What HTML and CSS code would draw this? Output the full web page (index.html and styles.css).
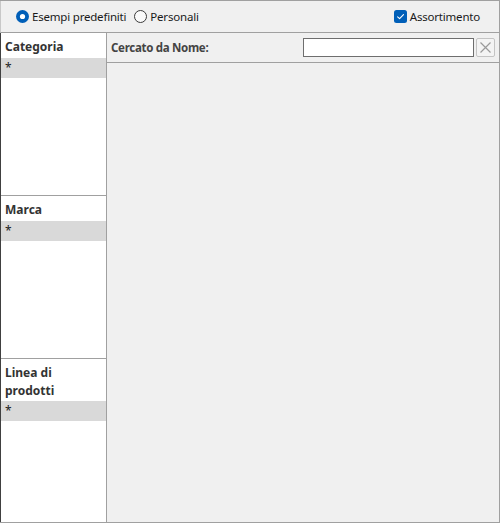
FILE: index.html
```html
<!DOCTYPE html>
<html lang="it">
<head>
<meta charset="utf-8">
<link rel="stylesheet" href="styles.css">
</head>
<body>
<div class="window">
  <div class="toolbar">
    <label class="opt">
      <svg class="radio" width="13" height="13" viewBox="0 0 13 13"><circle cx="6.5" cy="6.5" r="6.5" fill="#005fb8"/><circle cx="6.5" cy="6.5" r="2.6" fill="#fff"/></svg>
      <span>Esempi predefiniti</span>
    </label>
    <label class="opt">
      <svg class="radio" width="13" height="13" viewBox="0 0 13 13"><circle cx="6.5" cy="6.5" r="6" fill="#fafafa" stroke="#3a3a3a" stroke-width="1"/></svg>
      <span>Personali</span>
    </label>
    <label class="opt check-opt">
      <svg class="check" width="13" height="13" viewBox="0 0 13 13"><rect x="0" y="0" width="13" height="13" rx="2.5" fill="#005fb8"/><path d="M3.6 6.8 L5.6 8.7 L9.5 4.6" fill="none" stroke="#fff" stroke-width="1.1" stroke-linecap="round" stroke-linejoin="round"/></svg>
      <span>Assortimento</span>
    </label>
  </div>
  <div class="main">
    <div class="sidebar">
      <div class="section">
        <div class="sec-title">Categoria</div>
        <div class="sec-row">*</div>
      </div>
      <div class="section">
        <div class="sec-title">Marca</div>
        <div class="sec-row">*</div>
      </div>
      <div class="section last">
        <div class="sec-title two-line">Linea di<br>prodotti</div>
        <div class="sec-row">*</div>
      </div>
    </div>
    <div class="content">
      <div class="search-bar">
        <span class="search-label">Cercato da Nome:</span>
        <input class="search-input" type="text">
        <button class="clear-btn" type="button">
          <svg width="13" height="13" viewBox="0 0 13 13"><path d="M1.5 1.5 L11.5 11.5 M11.5 1.5 L1.5 11.5" stroke="#9a9a9a" stroke-width="1.2" fill="none"/></svg>
        </button>
      </div>
      <div class="results"></div>
    </div>
  </div>
</div>
</body>
</html>
```
FILE: styles.css
```css
html, body {
  margin: 0;
  padding: 0;
  background: #f0f0f0;
}
body {
  font-family: "Noto Sans", "Open Sans", sans-serif;
  font-size: 12px;
  color: #1a1a1a;
}
.window {
  width: 500px;
  height: 523px;
  box-sizing: border-box;
  border-top: 1px solid #a0a0a0;
  border-right: 1px solid #a0a0a0;
  border-bottom: 1px solid #a0a0a0;
  display: flex;
  flex-direction: column;
  background: #f0f0f0;
}
.toolbar {
  height: 31px;
  border-left: 1px solid #c8c8c8;
  border-bottom: 1px solid #a0a0a0;
  display: flex;
  align-items: center;
  padding-left: 15px;
  padding-right: 19px;
  box-sizing: border-box;
  flex: 0 0 32px;
}
.opt {
  display: flex;
  align-items: center;
  gap: 3px;
  margin-right: 8px;
  line-height: 16px;
  white-space: nowrap;
  font-size: 11.5px;
  letter-spacing: -0.2px;
}
.opt svg {
  display: block;
}
.check-opt {
  margin-left: auto;
  margin-right: 0;
}
.main {
  flex: 1;
  display: flex;
  min-height: 0;
}
.sidebar {
  width: 105px;
  border-left: 1px solid #404040;
  border-right: 1px solid #a0a0a0;
  background: #fff;
  display: flex;
  flex-direction: column;
}
.section {
  height: 162px;
  border-bottom: 1px solid #a0a0a0;
}
.section.last {
  border-bottom: none;
  flex: 1;
}
.sec-title {
  font-weight: bold;
  font-size: 12px;
  color: #333;
  line-height: 18px;
  padding: 5px 4px 2px 4px;
}
.sec-title.two-line {
  padding-bottom: 1px;
}
.sec-row {
  background: #d9d9d9;
  height: 20px;
  line-height: 20px;
  padding-left: 4px;
  color: #222;
  font-size: 12px;
}
.content {
  flex: 1;
  display: flex;
  flex-direction: column;
  background: #f0f0f0;
}
.search-bar {
  height: 29px;
  border-bottom: 1px solid #a0a0a0;
  display: flex;
  align-items: center;
  padding-left: 4px;
  padding-right: 4px;
}
.search-label {
  font-weight: bold;
  font-size: 11.5px;
  letter-spacing: -0.3px;
  color: #444;
  flex: 1;
}
.search-input {
  width: 171px;
  height: 19px;
  box-sizing: border-box;
  border: 1px solid #6e6e6e;
  background: #fff;
  margin: 0;
  padding: 0 2px;
}
.clear-btn {
  width: 19px;
  height: 19px;
  margin: 0 0 0 2px;
  padding: 0;
  border: 1px solid #c4c4c4;
  border-radius: 2px;
  background: #f4f4f4;
  display: flex;
  align-items: center;
  justify-content: center;
}
.clear-btn svg {
  display: block;
}
.results {
  flex: 1;
}
```
